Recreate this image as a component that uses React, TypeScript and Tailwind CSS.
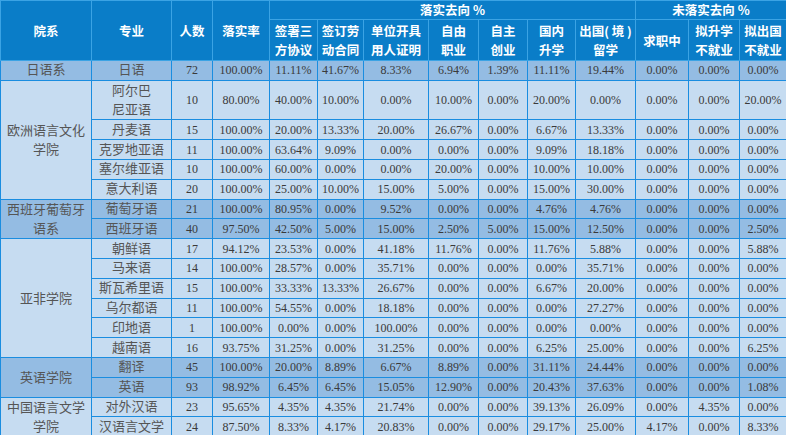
import type { ReactNode } from "react";

const colWidths = [91, 80, 41, 57, 48, 46, 65, 50, 49, 48, 60, 53, 51, 47];

type Row = {
  major: ReactNode;
  tall?: boolean;
  values: string[];
};

type Group = {
  dept: ReactNode;
  dark: boolean;
  rows: Row[];
};

const z = "0.00%";

const groups: Group[] = [
  {
    dept: "日语系",
    dark: true,
    rows: [{ major: "日语", values: ["72", "100.00%", "11.11%", "41.67%", "8.33%", "6.94%", "1.39%", "11.11%", "19.44%", z, z, z] }],
  },
  {
    dept: <>欧洲语言文化<br />学院</>,
    dark: false,
    rows: [
      { major: <>阿尔巴<br />尼亚语</>, tall: true, values: ["10", "80.00%", "40.00%", "10.00%", z, "10.00%", z, "20.00%", z, z, z, "20.00%"] },
      { major: "丹麦语", values: ["15", "100.00%", "20.00%", "13.33%", "20.00%", "26.67%", z, "6.67%", "13.33%", z, z, z] },
      { major: "克罗地亚语", values: ["11", "100.00%", "63.64%", "9.09%", z, z, z, "9.09%", "18.18%", z, z, z] },
      { major: "塞尔维亚语", values: ["10", "100.00%", "60.00%", z, z, "20.00%", z, "10.00%", "10.00%", z, z, z] },
      { major: "意大利语", values: ["20", "100.00%", "25.00%", "10.00%", "15.00%", "5.00%", z, "15.00%", "30.00%", z, z, z] },
    ],
  },
  {
    dept: <>西班牙葡萄牙<br />语系</>,
    dark: true,
    rows: [
      { major: "葡萄牙语", values: ["21", "100.00%", "80.95%", z, "9.52%", z, z, "4.76%", "4.76%", z, z, z] },
      { major: "西班牙语", values: ["40", "97.50%", "42.50%", "5.00%", "15.00%", "2.50%", "5.00%", "15.00%", "12.50%", z, z, "2.50%"] },
    ],
  },
  {
    dept: "亚非学院",
    dark: false,
    rows: [
      { major: "朝鲜语", values: ["17", "94.12%", "23.53%", z, "41.18%", "11.76%", z, "11.76%", "5.88%", z, z, "5.88%"] },
      { major: "马来语", values: ["14", "100.00%", "28.57%", z, "35.71%", z, z, z, "35.71%", z, z, z] },
      { major: "斯瓦希里语", values: ["15", "100.00%", "33.33%", "13.33%", "26.67%", z, z, "6.67%", "20.00%", z, z, z] },
      { major: "乌尔都语", values: ["11", "100.00%", "54.55%", z, "18.18%", z, z, z, "27.27%", z, z, z] },
      { major: "印地语", values: ["1", "100.00%", z, z, "100.00%", z, z, z, z, z, z, z] },
      { major: "越南语", values: ["16", "93.75%", "31.25%", z, "31.25%", z, z, "6.25%", "25.00%", z, z, "6.25%"] },
    ],
  },
  {
    dept: "英语学院",
    dark: true,
    rows: [
      { major: "翻译", values: ["45", "100.00%", "20.00%", "8.89%", "6.67%", "8.89%", z, "31.11%", "24.44%", z, z, z] },
      { major: "英语", values: ["93", "98.92%", "6.45%", "6.45%", "15.05%", "12.90%", z, "20.43%", "37.63%", z, z, "1.08%"] },
    ],
  },
  {
    dept: <>中国语言文学<br />学院</>,
    dark: false,
    rows: [
      { major: "对外汉语", values: ["23", "95.65%", "4.35%", "4.35%", "21.74%", z, z, "39.13%", "26.09%", z, "4.35%", z] },
      { major: "汉语言文学", values: ["24", "87.50%", "8.33%", "4.17%", "20.83%", z, z, "29.17%", "25.00%", "4.17%", z, "8.33%"] },
    ],
  },
];

const th = "border border-[#3ba3e4] p-0 text-center align-middle font-bold";
const td = "border border-[#1a8de0] p-0 text-center align-middle";

export default function App() {
  return (
    <div className="h-[435px] w-[786px] overflow-hidden bg-[#c6dcf1]">
      <table className="w-[787px] table-fixed border-collapse font-['Liberation_Serif','Noto_Sans_CJK_SC',serif] text-[12px] leading-[16px] text-[#3a3a3a]">
        <colgroup>
          {colWidths.map((w, i) => (
            <col key={i} style={{ width: w }} />
          ))}
        </colgroup>
        <thead className="bg-[#0a7dc8] font-['Noto_Sans_CJK_SC',sans-serif] text-[12.5px] leading-[19px] text-white">
          <tr className="h-[19px]">
            <th rowSpan={2} className={th}>院系</th>
            <th rowSpan={2} className={th}>专业</th>
            <th rowSpan={2} className={th}>人数</th>
            <th rowSpan={2} className={th}>落实率</th>
            <th colSpan={7} className={`${th} leading-[16px]`}>落实去向 %</th>
            <th colSpan={3} className={`${th} leading-[16px]`}>未落实去向 %</th>
          </tr>
          <tr className="h-[41px]">
            <th className={th}>签署三<br />方协议</th>
            <th className={th}>签订劳<br />动合同</th>
            <th className={th}>单位开具<br />用人证明</th>
            <th className={th}>自由<br />职业</th>
            <th className={th}>自主<br />创业</th>
            <th className={th}>国内<br />升学</th>
            <th className={`${th} whitespace-nowrap`}>出国( 境 )<br />留学</th>
            <th className={th}>求职中</th>
            <th className={th}>拟升学<br />不就业</th>
            <th className={th}>拟出国<br />不就业</th>
          </tr>
        </thead>
        <tbody>
          {groups.map((g, gi) =>
            g.rows.map((r, ri) => (
              <tr
                key={`${gi}-${ri}`}
                className={`${r.tall ? "h-[39.6px]" : "h-[19.8px]"} ${g.dark ? "bg-[#94bce3]" : "bg-[#c6dcf1]"}`}
              >
                {ri === 0 && (
                  <td rowSpan={g.rows.length} className={`${td} text-[13px] text-[#555] ${g.rows.length > 1 ? "leading-[19px]" : "leading-[16px]"}`}>
                    {g.dept}
                  </td>
                )}
                <td className={`${td} text-[13px] text-[#555] ${r.tall ? "leading-[19px]" : "leading-[16px]"}`}>{r.major}</td>
                {r.values.map((v, vi) => (
                  <td key={vi} className={td}>
                    {v}
                  </td>
                ))}
              </tr>
            ))
          )}
        </tbody>
      </table>
    </div>
  );
}
